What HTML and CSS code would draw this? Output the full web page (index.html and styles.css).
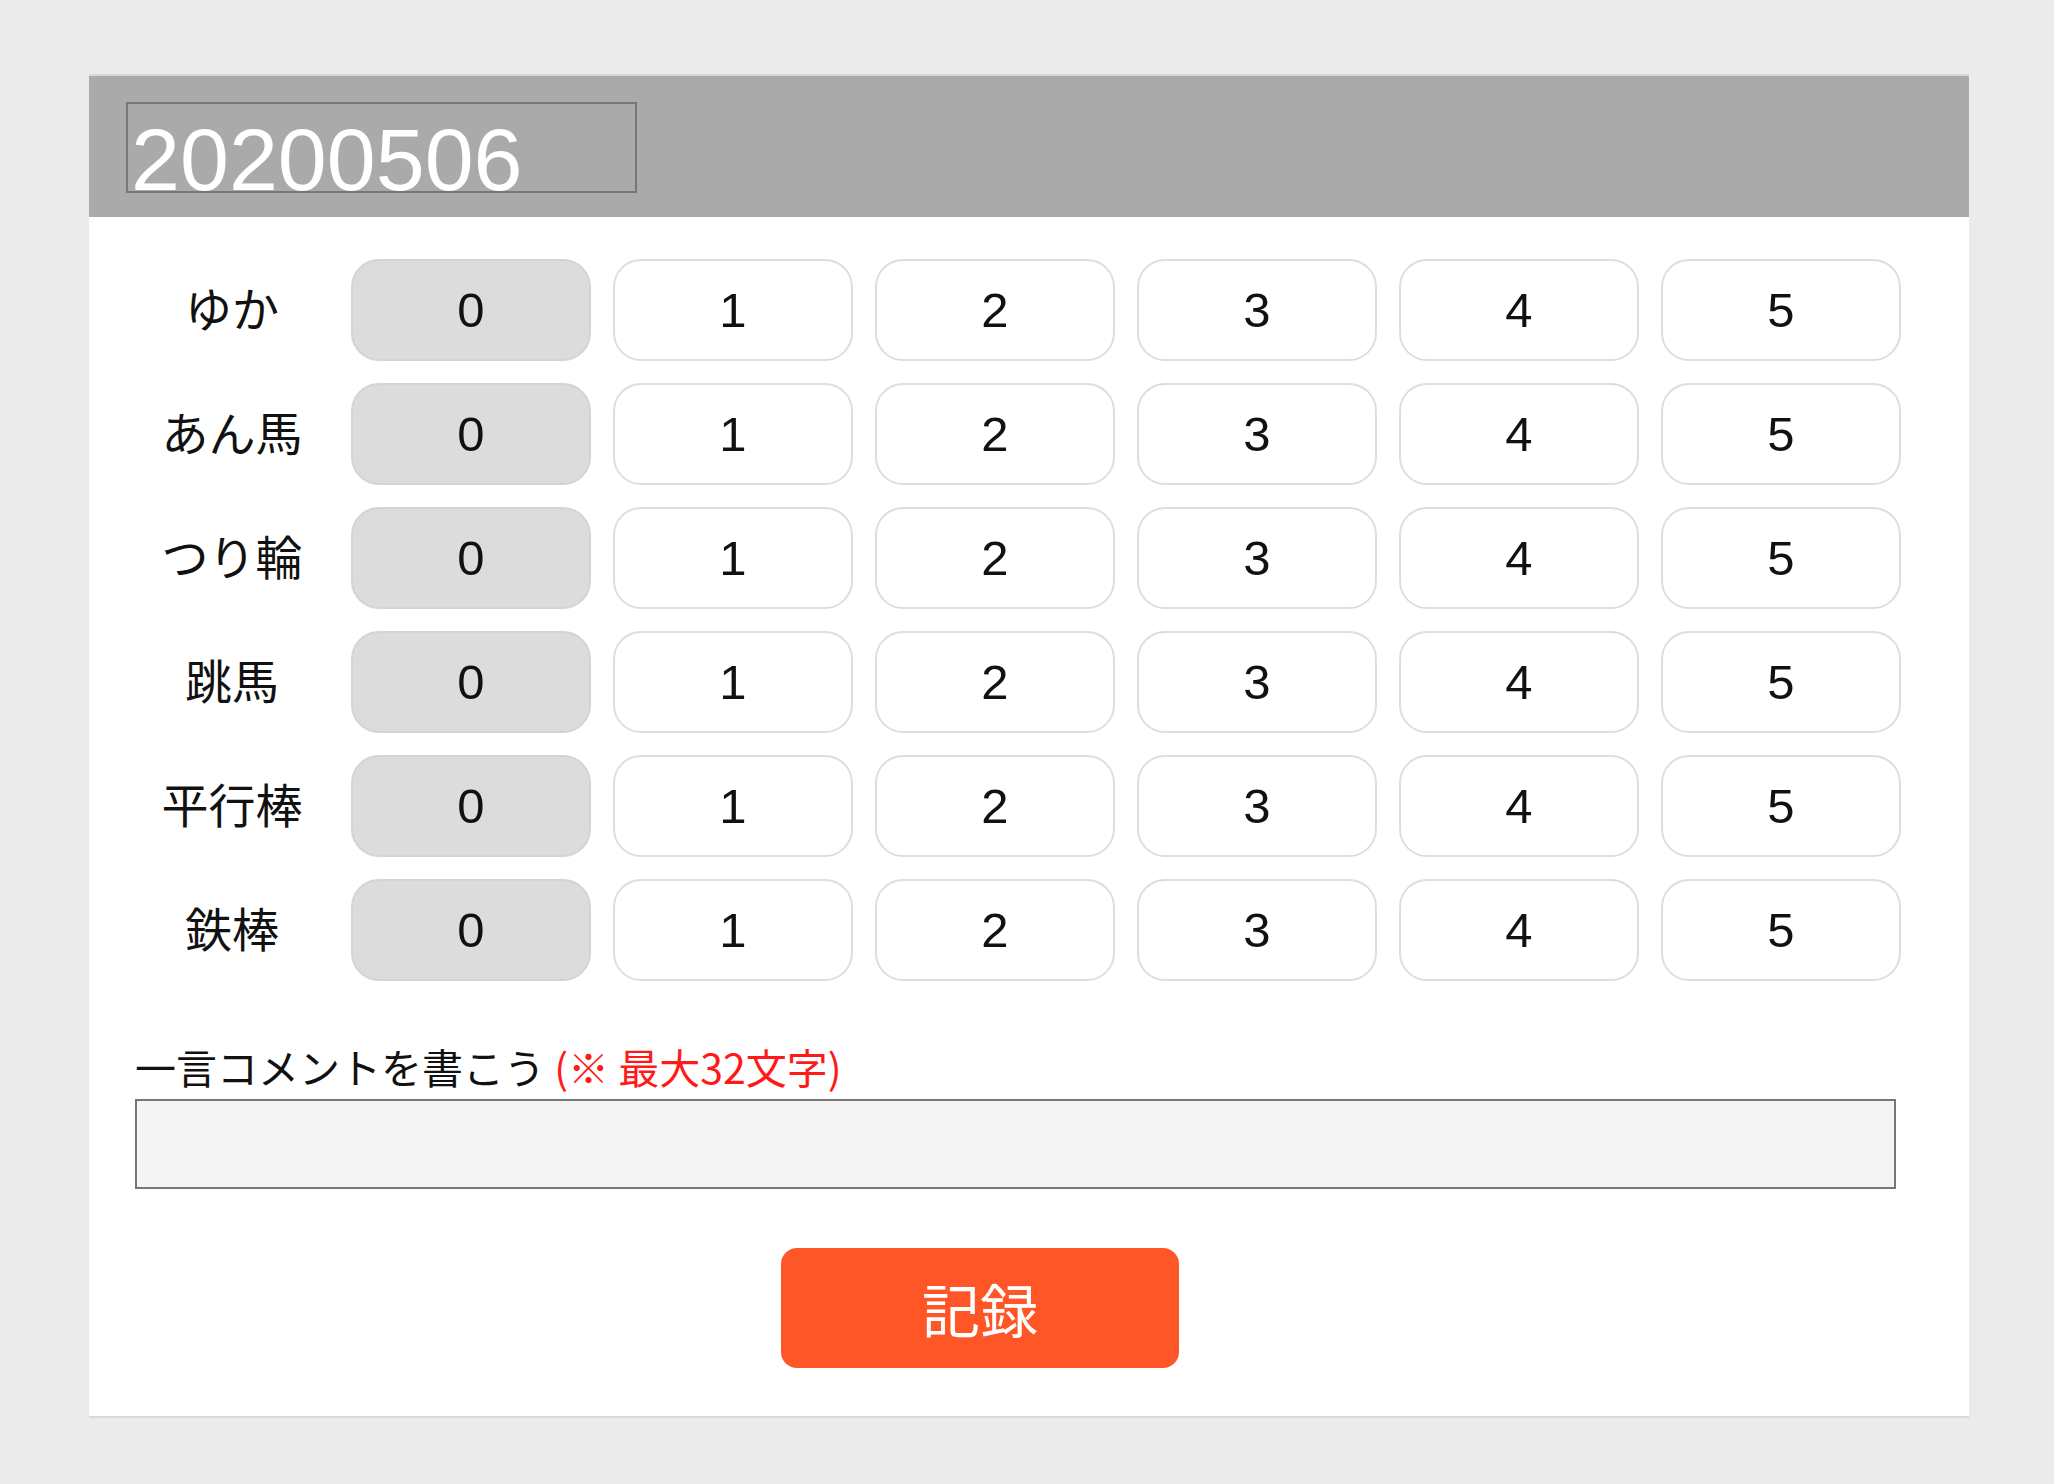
FILE: index.html
```html
<!DOCTYPE html>
<html lang="ja">
<head>
<meta charset="utf-8">
<title>記録</title>
<link rel="stylesheet" href="styles.css">
</head>
<body>
<div class="card">
  <div class="header">
    <div class="date-box"><span class="date">20200506</span></div>
  </div>
  <div class="content">
    <div class="grid">
      <div class="row"><div class="label">ゆか</div><div class="opt sel">0</div><div class="opt">1</div><div class="opt">2</div><div class="opt">3</div><div class="opt">4</div><div class="opt">5</div></div>
      <div class="row"><div class="label">あん馬</div><div class="opt sel">0</div><div class="opt">1</div><div class="opt">2</div><div class="opt">3</div><div class="opt">4</div><div class="opt">5</div></div>
      <div class="row"><div class="label">つり輪</div><div class="opt sel">0</div><div class="opt">1</div><div class="opt">2</div><div class="opt">3</div><div class="opt">4</div><div class="opt">5</div></div>
      <div class="row"><div class="label">跳馬</div><div class="opt sel">0</div><div class="opt">1</div><div class="opt">2</div><div class="opt">3</div><div class="opt">4</div><div class="opt">5</div></div>
      <div class="row"><div class="label">平行棒</div><div class="opt sel">0</div><div class="opt">1</div><div class="opt">2</div><div class="opt">3</div><div class="opt">4</div><div class="opt">5</div></div>
      <div class="row"><div class="label">鉄棒</div><div class="opt sel">0</div><div class="opt">1</div><div class="opt">2</div><div class="opt">3</div><div class="opt">4</div><div class="opt">5</div></div>
    </div>
    <div class="comment-label">一言コメントを書こう <span class="note">(※ 最大32文字)</span></div>
    <div class="comment-input"></div>
    <div class="record">記録</div>
  </div>
</div>
</body>
</html>
```
FILE: styles.css
```css
html, body {
  margin: 0;
  padding: 0;
}
body {
  background: #ebebeb;
  font-family: "Noto Sans CJK JP", "Liberation Sans", sans-serif;
  color: #111;
  padding: 74px 0 0 89px;
}
.card {
  width: 1880px;
  background: #fff;
  border-top: 2px solid #d6dbd3;
  border-bottom: 2px solid #d6dbd3;
}
.header {
  height: 141px;
  box-sizing: border-box;
  background: #aaaaaa;
  padding: 26px 0 0 37px;
}
.date-box {
  width: 511px;
  height: 91px;
  box-sizing: border-box;
  border: 2px solid #777;
  overflow: hidden;
  padding-left: 3px;
}
.date {
  display: block;
  font-family: "Liberation Sans", Arial, sans-serif;
  font-size: 88px;
  line-height: 112px;
  color: #fff;
  white-space: nowrap;
}
.content {
  padding: 42px 68px 48px 46px;
}
.grid {
  display: flex;
  flex-direction: column;
  gap: 22px;
}
.row {
  display: flex;
  gap: 22px;
  align-items: center;
}
.label {
  width: 194px;
  text-align: center;
  font-size: 47px;
  line-height: 96px;
  padding-bottom: 6px;
}
.opt {
  width: 240px;
  height: 102px;
  box-sizing: border-box;
  border: 2px solid #dedede;
  border-radius: 28px;
  background: #fff;
  display: flex;
  align-items: center;
  justify-content: center;
  font-family: "Liberation Sans", Arial, sans-serif;
  font-size: 49px;
  color: #111;
}
.opt.sel {
  background: #dcdcdc;
  border-color: #d4d4d4;
}
.comment-label {
  margin-top: 61px;
  font-size: 41px;
  line-height: 48px;
  color: #111;
}
.note {
  color: #ff1a1a;
}
.comment-input {
  margin-top: 9px;
  width: 1761px;
  height: 90px;
  box-sizing: border-box;
  border: 2px solid #777;
  background: #f4f4f4;
}
.record {
  margin: 59px 0 0 646px;
  width: 398px;
  height: 120px;
  border-radius: 16px;
  background: #ff5628;
  color: #fff;
  font-size: 58px;
  display: flex;
  align-items: center;
  justify-content: center;
}
```
